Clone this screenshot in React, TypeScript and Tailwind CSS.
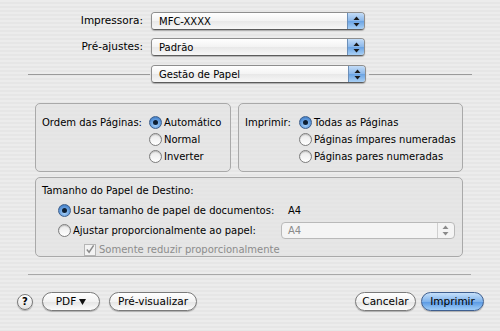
import React from 'react';

const font = { fontFamily: '"DejaVu Sans", "Liberation Sans", sans-serif' };

function Arrows({ dim }: { dim?: boolean }) {
  return (
    <svg width="7" height="11" viewBox="0 0 7 11">
      <path d="M3.5 0.5 L6.5 4 L0.5 4 Z" fill={dim ? '#8a8a8a' : '#1a1a1a'} />
      <path d="M3.5 10.5 L6.5 7 L0.5 7 Z" fill={dim ? '#8a8a8a' : '#1a1a1a'} />
    </svg>
  );
}

function Popup({ value, width = 'w-[214px]' }: { value: string; width?: string }) {
  return (
    <div
      className={`${width} h-[18px] flex rounded-[4px] border border-[#8e8e8e] border-b-[#5c5c5c] shadow-[0_1px_1px_rgba(0,0,0,0.25)] overflow-hidden`}
    >
      <div className="flex-1 flex items-center pl-[7px] text-[10px] text-black bg-[linear-gradient(#ffffff,#f3f3f3_50%,#e8e8e8_51%,#f7f7f7)]">
        {value}
      </div>
      <div className="w-[17px] flex items-center justify-center border-l border-[#6c8fb8] bg-[linear-gradient(#c3dcf7,#8ab7ea_50%,#6aa3e3_51%,#a9d0f5)]">
        <Arrows />
      </div>
    </div>
  );
}

function Radio({ on, label }: { on?: boolean; label: string }) {
  return (
    <div className="flex items-center h-[17px] gap-[2px] whitespace-nowrap">
      {on ? (
        <div className="w-[13px] h-[13px] shrink-0 rounded-full border border-[#3d5f8c] bg-[radial-gradient(circle_at_50%_70%,#a9d3fb,#5b95d8_60%,#2f6bb5)] flex items-center justify-center">
          <div className="w-[5px] h-[5px] rounded-full bg-[#0d1f33]" />
        </div>
      ) : (
        <div className="w-[13px] h-[13px] shrink-0 rounded-full border border-[#7d7d7d] bg-[linear-gradient(#e9e9e9,#ffffff)] shadow-[inset_0_1px_1px_rgba(0,0,0,0.2)]" />
      )}
      <span className="text-[10px] text-black">{label}</span>
    </div>
  );
}

function Button({ children, primary, className = '' }: { children: React.ReactNode; primary?: boolean; className?: string }) {
  return (
    <div
      className={`h-[19px] flex items-center justify-center rounded-full text-[10.5px] text-black border shadow-[0_1px_1px_rgba(0,0,0,0.25)] whitespace-nowrap ${
        primary
          ? 'border-[#3f5f8f] bg-[linear-gradient(#c6e0fa,#7fb3ec_50%,#5797e2_51%,#9fcdf7)]'
          : 'border-[#7a7a7a] bg-[linear-gradient(#ffffff,#f2f2f2_50%,#e4e4e4_51%,#fbfbfb)]'
      } ${className}`}
    >
      {children}
    </div>
  );
}

function Line({ className = '' }: { className?: string }) {
  return <div className={`h-px bg-[#9a9a9a] ${className}`} />;
}

export default function App() {
  return (
    <div
      style={font}
      className="w-[500px] h-[331px] overflow-hidden bg-[repeating-linear-gradient(#ececec_0px,#ececec_2px,#e6e6e6_2px,#e6e6e6_4px)] text-black whitespace-nowrap"
    >
      <div className="pt-[12px] flex flex-col gap-[8px]">
        <div className="flex items-center">
          <div className="w-[151px] text-right pr-[8px] text-[10.5px]">Impressora:</div>
          <Popup value="MFC-XXXX" />
        </div>
        <div className="flex items-center">
          <div className="w-[151px] text-right pr-[8px] text-[10.5px]">Pré-ajustes:</div>
          <Popup value="Padrão" />
        </div>
        <div className="flex items-center mt-[1px]">
          <Line className="ml-[28px] w-[122px]" />
          <div className="ml-[1px]">
            <Popup value="Gestão de Papel" width="w-[215px]" />
          </div>
          <Line className="ml-[3px] w-[103px]" />
        </div>
      </div>

      <div className="flex ml-[35px] mt-[20px] gap-[7px]">
        <div className="w-[196px] h-[69px] rounded-[5px] border border-[#a9a9a9] bg-[#e3e3e3]/60 pl-[6px] pt-[10px] flex">
          <div className="text-[10px] w-[107px] leading-[17px]">Ordem das Páginas:</div>
          <div className="flex flex-col">
            <Radio on label="Automático" />
            <Radio label="Normal" />
            <Radio label="Inverter" />
          </div>
        </div>
        <div className="w-[225px] h-[69px] rounded-[5px] border border-[#a9a9a9] bg-[#e3e3e3]/60 pl-[6px] pt-[10px] flex">
          <div className="text-[10px] w-[54px] leading-[17px]">Imprimir:</div>
          <div className="flex flex-col">
            <Radio on label="Todas as Páginas" />
            <Radio label="Páginas ímpares numeradas" />
            <Radio label="Páginas pares numeradas" />
          </div>
        </div>
      </div>

      <div className="ml-[35px] mt-[5px] w-[428px] h-[80px] rounded-[5px] border border-[#a9a9a9] bg-[#e3e3e3]/60 pl-[6px] pt-[4px]">
        <div className="text-[10px] h-[17px] leading-[17px]">Tamanho do Papel de Destino:</div>
        <div className="pl-[16px] mt-[3px] flex flex-col gap-[3px]">
          <div className="flex items-center">
            <div className="w-[230px]">
              <Radio on label="Usar tamanho de papel de documentos:" />
            </div>
            <span className="text-[10px]">A4</span>
          </div>
          <div className="flex items-center">
            <div className="w-[223px]">
              <Radio label="Ajustar proporcionalmente ao papel:" />
            </div>
            <div className="w-[174px] h-[17px] flex items-center justify-between rounded-[4px] border border-[#b9b9b9] bg-[#f4f4f4] pl-[6px] pr-[5px] text-[10px] text-[#8a8a8a]">
              <span>A4</span>
              <div className="border-l border-[#cfcfcf] pl-[4px] h-full flex items-center">
                <Arrows dim />
              </div>
            </div>
          </div>
          <div className="flex items-center pl-[26px] h-[15px] gap-[3px]">
            <div className="w-[12px] h-[12px] border border-[#b5b5b5] bg-[#f3f3f3] flex items-center justify-center">
              <svg width="11" height="11" viewBox="0 0 11 11">
                <path d="M2 5.5 L4.5 8.5 L9.5 1" fill="none" stroke="#8a8a8a" strokeWidth="1.6" />
              </svg>
            </div>
            <span className="text-[10px] text-[#8c8c8c]">Somente reduzir proporcionalmente</span>
          </div>
        </div>
      </div>

      <Line className="ml-[28px] w-[443px] mt-[17px] h-[2px] bg-[#a8a8a8]" />

      <div className="flex items-center mt-[17px] pl-[17px] pr-[16px]">
        <div className="w-[16px] h-[16px] rounded-full border border-[#7a7a7a] bg-[linear-gradient(#ffffff,#e2e2e2)] shadow-[0_1px_1px_rgba(0,0,0,0.25)] flex items-center justify-center text-[10px] font-bold">
          ?
        </div>
        <Button className="ml-[9px] w-[58px] gap-[3px]">
          PDF
          <svg width="7" height="6" viewBox="0 0 7 6">
            <path d="M0 0 L7 0 L3.5 6 Z" fill="#111" />
          </svg>
        </Button>
        <Button className="ml-[9px] w-[88px]">Pré-visualizar</Button>
        <div className="flex-1" />
        <Button className="w-[61px]">Cancelar</Button>
        <Button primary className="ml-[5px] w-[63px]">Imprimir</Button>
      </div>
    </div>
  );
}
